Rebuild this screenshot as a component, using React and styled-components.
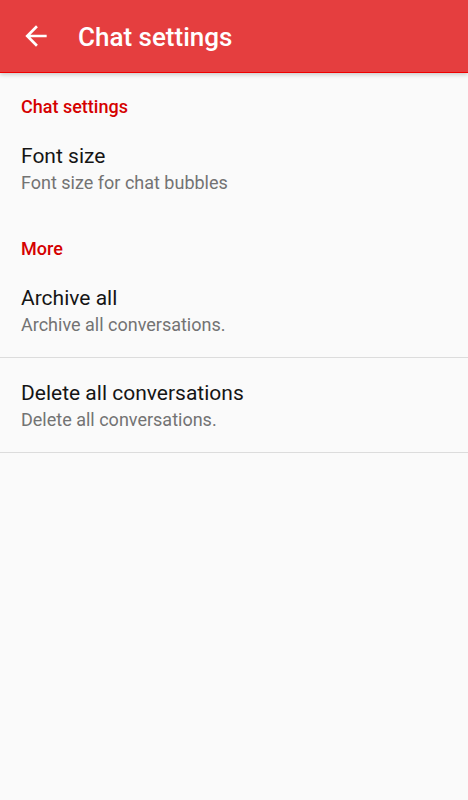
import React from 'react';
import styled, { createGlobalStyle } from 'styled-components';

const GlobalStyle = createGlobalStyle`
  html, body {
    margin: 0;
    padding: 0;
    background: #fafafa;
    font-family: Roboto, "Noto Sans", sans-serif;
  }
`;

const Screen = styled.div`
  width: 468px;
  min-height: 800px;
  background: #fafafa;
`;

const AppBar = styled.header`
  position: relative;
  height: 73px;
  background: #e53e3f;
  border-bottom: 1px solid #f00000;
  box-shadow: 0 2px 4px rgba(0, 0, 0, 0.18);
  display: flex;
  align-items: center;
  box-sizing: border-box;
  color: #fff;
`;

const BackButton = styled.button`
  width: 32px;
  height: 32px;
  margin-left: 20px;
  padding: 0;
  border: 0;
  background: none;
  color: #fff;
  display: flex;
  align-items: center;
  justify-content: center;
`;

const Title = styled.h1`
  margin: 2px 0 0 26px;
  font-size: 26px;
  font-weight: 500;
`;

const Category = styled.div`
  padding: 23px 21px 3px;
  font-size: 18px;
  line-height: 22px;
  font-weight: 500;
  color: #d50000;
`;

const Item = styled.div`
  padding: 22px 21px 21px;
  border-bottom: ${({ divider }) => (divider ? '1px solid #dcdcdc' : 'none')};
`;

const ItemTitle = styled.div`
  font-size: 21px;
  line-height: 26px;
  color: #151515;
`;

const ItemSummary = styled.div`
  margin-top: 3px;
  font-size: 18px;
  line-height: 22px;
  color: #737373;
`;

const BackIcon = () => (
  <svg width="32" height="32" viewBox="0 0 24 24" fill="currentColor">
    <path d="M20 11H7.83l5.59-5.59L12 4l-8 8 8 8 1.41-1.41L7.83 13H20v-2z" />
  </svg>
);

const sections = [
  {
    title: 'Chat settings',
    items: [{ title: 'Font size', summary: 'Font size for chat bubbles' }],
  },
  {
    title: 'More',
    items: [
      { title: 'Archive all', summary: 'Archive all conversations.', divider: true },
      { title: 'Delete all conversations', summary: 'Delete all conversations.', divider: true },
    ],
  },
];

const App = () => (
  <Screen>
    <GlobalStyle />
    <AppBar>
      <BackButton aria-label="Back">
        <BackIcon />
      </BackButton>
      <Title>Chat settings</Title>
    </AppBar>
    {sections.map((section) => (
      <section key={section.title}>
        <Category>{section.title}</Category>
        {section.items.map((item) => (
          <Item key={item.title} divider={item.divider}>
            <ItemTitle>{item.title}</ItemTitle>
            <ItemSummary>{item.summary}</ItemSummary>
          </Item>
        ))}
      </section>
    ))}
  </Screen>
);

export default App;
